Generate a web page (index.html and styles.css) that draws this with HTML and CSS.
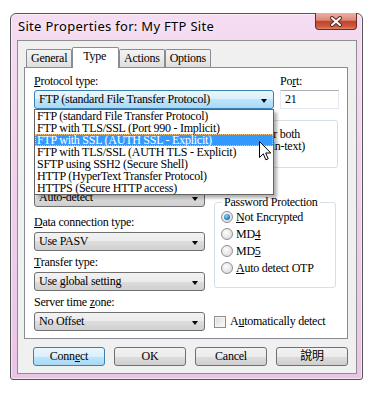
FILE: index.html
```html
<!DOCTYPE html>
<html lang="en">
  <head>
    <meta charset="UTF-8" />
    <meta name="viewport" content="width=device-width, initial-scale=1.0" />
    <title>Site Properties</title>

    <link rel="stylesheet" href="styles.css">
  </head>
  <body>
    <!-- The dialog window -->
    <div class="window">
      <div class="titlebar">
        <span class="title">Site Properties for: My FTP Site</span>
        <div class="close">
          <svg width="14" height="11" viewBox="0 0 14 11">
            <path d="M3 2 L11 9 M11 2 L3 9" stroke="#5a2a24" stroke-width="4" stroke-linecap="round" />
            <path d="M3 2 L11 9 M11 2 L3 9" stroke="#fff" stroke-width="2" stroke-linecap="round" />
          </svg>
        </div>
      </div>

      <div class="client">
        <!-- Tabs -->
        <div class="tabs">
          <div class="tab">General</div>
          <div class="tab active">Type</div>
          <div class="tab">Actions</div>
          <div class="tab">Options</div>
        </div>

        <div class="panel">
          <!-- Protocol + port -->
          <div class="row">
            <div class="field protocol">
              <div class="lbl"><u>P</u>rotocol type:</div>
              <div class="combo focused">FTP (standard File Transfer Protocol)</div>
              <ul class="droplist">
                <li>FTP (standard File Transfer Protocol)</li>
                <li>FTP with TLS/SSL (Port 990 - Implicit)</li>
                <li class="hover">FTP with SSL (AUTH SSL - Explicit)</li>
                <li>FTP with TLS/SSL (AUTH TLS - Explicit)</li>
                <li>SFTP using SSH2 (Secure Shell)</li>
                <li>HTTP (HyperText Transfer Protocol)</li>
                <li>HTTPS (Secure HTTP access)</li>
                <svg class="cursor" width="13" height="20" viewBox="0 0 13 20">
                  <path d="M0.5 0.5 L0.5 16.5 L4.3 12.8 L6.8 18.8 L9.2 17.8 L6.7 12 L11.8 12 Z" fill="#fff" stroke="#000" stroke-linejoin="round" />
                </svg>
              </ul>
            </div>
            <div class="field port">
              <div class="lbl">Po<u>r</u>t:</div>
              <div class="textbox">21</div>
            </div>
          </div>

          <!-- SSL note, mostly under the open list -->
          <div class="row ssl">
            <div class="col-left"></div>
            <div class="note">Data only, or both<br>data (no plain-text)</div>
          </div>

          <div class="row">
            <div class="col-left">
              <div class="combo first">Auto-detect</div>
              <div class="lbl gap"><u>D</u>ata connection type:</div>
              <div class="combo">Use PASV</div>
              <div class="lbl"><u>T</u>ransfer type:</div>
              <div class="combo">Use global setting</div>
            </div>
            <fieldset class="group">
              <legend>Password Protection</legend>
              <label class="radio"><span class="dot on"></span><u>N</u>ot Encrypted</label>
              <label class="radio"><span class="dot"></span>MD<u>4</u></label>
              <label class="radio"><span class="dot"></span>MD<u>5</u></label>
              <label class="radio"><span class="dot"></span><u>A</u>uto detect OTP</label>
            </fieldset>
          </div>

          <div class="lbl">Server time <u>z</u>one:</div>
          <div class="row">
            <div class="col-left">
              <div class="combo">No Offset</div>
            </div>
            <label class="check"><span class="box"></span>A<u>u</u>tomatically detect</label>
          </div>
        </div>

        <!-- Dialog buttons -->
        <div class="buttons">
          <button class="btn default">Conn<u>e</u>ct</button>
          <button class="btn">OK</button>
          <button class="btn">Cancel</button>
          <button class="btn">說明</button>
        </div>
      </div>
    </div>
  </body>
</html>
```

FILE: styles.css
```css
/* Page */
body {
  margin: 0;
  background: #fff;
  font-family: "Liberation Serif", "Noto Sans CJK TC", serif;
  font-size: 12px;
  letter-spacing: -0.25px;
  color: #000;
}

/* The window frame (pink glass) */
.window {
  box-sizing: border-box;
  width: 353px;
  height: 367px;
  margin: 13px 0 0 10px;
  padding: 0 5px 5px 6px;
  border: 1px solid #555;
  border-radius: 6px 6px 3px 3px;
  background: linear-gradient(#f5dcf2, #f1d1ed 45%, #eac4e6);
  box-shadow: inset 0 0 0 1px rgba(255, 255, 255, 0.55);
  display: flex;
  flex-direction: column;
}

.titlebar {
  height: 26px;
  display: flex;
  justify-content: space-between;
  align-items: flex-start;
}

.title {
  padding: 4px 0 0 1px;
  font-family: "Noto Sans", sans-serif;
  font-size: 13px;
  letter-spacing: 0.3px;
  line-height: 16px;
  text-shadow: 0 0 6px #fff;
}

.close {
  width: 42px;
  height: 17px;
  margin-top: -1px;
  box-sizing: border-box;
  border: 1px solid #6a2b22;
  border-top: none;
  border-radius: 0 0 4px 4px;
  background: linear-gradient(#eab0a4, #de8a77 45%, #c2432c 52%, #cf5a40 85%, #e08a6c);
  display: flex;
  align-items: center;
  justify-content: center;
}

/* Client area */
.client {
  flex: 1;
  border: 1px solid #8e8e8e;
  background: #f0f0f0;
  padding: 6px 8px 7px 6px;
}

.tabs {
  display: flex;
  align-items: flex-end;
  height: 20px;
  padding-left: 2px;
}

.tab {
  height: 18px;
  box-sizing: border-box;
  padding: 0 4px;
  border: 1px solid #898c95;
  border-bottom: none;
  border-radius: 2px 2px 0 0;
  background: linear-gradient(#f3f3f3, #ebebeb 50%, #dedede);
  line-height: 17px;
}

.tab.active {
  height: 21px;
  margin-bottom: -1px;
  padding: 0 12px 0 10px;
  background: #fff;
  position: relative;
  line-height: 16px;
}

.panel {
  box-sizing: border-box;
  height: 272px;
  border: 1px solid #898c95;
  background: #fff;
  padding: 6px 8px 0 9px;
}

.row {
  display: flex;
}

.field {
  display: flex;
  flex-direction: column;
}

.protocol {
  width: 240px;
  position: relative;
}

.port {
  width: 59px;
  margin-left: 6px;
}

.lbl {
  height: 14px;
  line-height: 14px;
  margin: 4px 0 3px;
}

.field .lbl {
  margin: 0 0 2px;
}

.lbl.gap {
  margin-top: 8px;
}

/* Combo boxes */
.combo {
  height: 19px;
  box-sizing: border-box;
  border: 1px solid #707070;
  border-radius: 3px;
  background: linear-gradient(#f2f2f2, #ebebeb 50%, #dddddd 50%, #cfcfcf);
  padding-left: 4px;
  line-height: 17px;
  position: relative;
  white-space: nowrap;
}

.combo.first {
  margin-top: 20px;
}

.combo::after {
  content: "";
  position: absolute;
  right: 6px;
  top: 8px;
  border-left: 3.5px solid transparent;
  border-right: 3.5px solid transparent;
  border-top: 4px solid #000;
}

.combo.focused {
  border-color: #3c7fb1;
  background: linear-gradient(#eaf6fd, #d9f0fc 50%, #bee6fd 50%, #a7d9f5);
}

.textbox {
  height: 19px;
  box-sizing: border-box;
  border: 1px solid #e3e9ef;
  border-top-color: #abadb3;
  background: #fff;
  padding-left: 4px;
  line-height: 17px;
}

/* The open drop-down list */
.droplist {
  position: absolute;
  top: 35px;
  left: 0;
  width: 240px;
  box-sizing: border-box;
  margin: 0;
  padding: 0;
  list-style: none;
  border: 1px solid #646464;
  background: #fff;
  box-shadow: 3px 3px 3px rgba(0, 0, 0, 0.3);
  z-index: 2;
}

.droplist li {
  height: 12px;
  line-height: 12px;
  padding-left: 2px;
  white-space: nowrap;
}

.droplist li.hover {
  background: #3399ff;
  color: #fff;
  outline: 1px dotted #f3c27a;
  outline-offset: -1px;
}

.cursor {
  position: absolute;
  left: 224px;
  top: 31px;
}

/* SSL note row */
.ssl {
  height: 48px;
  margin-top: 11px;
}

.col-left {
  width: 171px;
  display: flex;
  flex-direction: column;
}

.note {
  width: 124px;
  margin-left: 9px;
  box-sizing: border-box;
  border: 1px solid #d5dfe5;
  border-radius: 3px;
  padding: 7px 0 0 3px;
  line-height: 12px;
  white-space: nowrap;
}

/* Check boxes and radios */
.check {
  display: flex;
  align-items: center;
  height: 19px;
  margin-left: 9px;
}

.box {
  width: 12px;
  height: 12px;
  box-sizing: border-box;
  border: 1px solid #8f8f8f;
  background: linear-gradient(135deg, #dcdcdc, #fbfbfb);
  box-shadow: inset 0 0 0 1px #f4f4f4;
  margin-right: 4px;
}

.group {
  width: 122px;
  box-sizing: border-box;
  margin: 27px 0 0 9px;
  padding: 0 0 7px 6px;
  border: 1px solid #d5dfe5;
  border-radius: 3px;
  height: 93px;
}

.group legend {
  padding: 0 2px;
  margin-left: 1px;
  line-height: 14px;
}

.radio {
  display: flex;
  align-items: center;
  height: 18px;
  margin-top: -1px;
}

.dot {
  width: 12px;
  height: 12px;
  box-sizing: border-box;
  border: 1px solid #8e8f8f;
  border-radius: 50%;
  background: radial-gradient(circle at 40% 35%, #fdfdfd, #d4d4d4);
  margin-right: 3px;
  display: flex;
  align-items: center;
  justify-content: center;
}

.dot.on::after {
  content: "";
  width: 6px;
  height: 6px;
  border-radius: 50%;
  background: radial-gradient(circle at 40% 35%, #8fd6ff, #1273b8 70%, #0b4f86);
}

/* Buttons */
.buttons {
  display: flex;
  justify-content: flex-end;
  gap: 9px;
  margin-top: 8px;
}

.btn {
  width: 72px;
  height: 19px;
  box-sizing: border-box;
  padding: 0;
  border: 1px solid #707070;
  border-radius: 3px;
  background: linear-gradient(#f2f2f2, #ebebeb 50%, #dddddd 50%, #cfcfcf);
  font-family: "Liberation Serif", "Noto Sans CJK TC", serif;
  font-size: 12px;
  letter-spacing: -0.25px;
  line-height: 17px;
  color: #000;
}

.btn.default {
  border-color: #3c7fb1;
  background: linear-gradient(#eaf6fd, #d9f0fc 50%, #bee6fd 50%, #a7d9f5);
}
```
